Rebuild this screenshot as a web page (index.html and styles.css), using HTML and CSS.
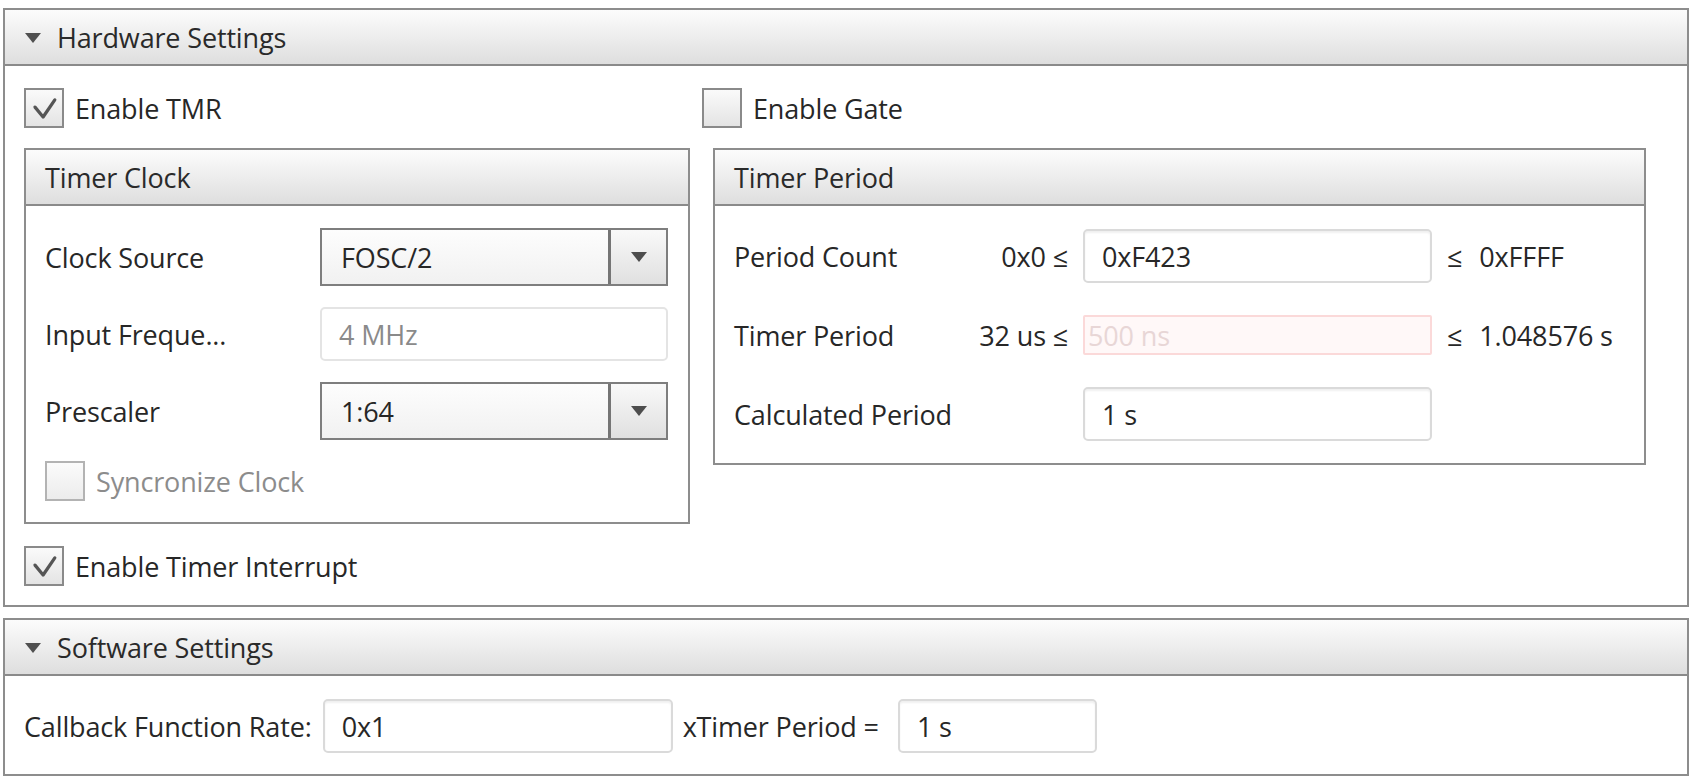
FILE: index.html
```html
<!DOCTYPE html>
<html>

<head>
	<title>TMR Configuration</title>
	<link rel="stylesheet" href="styles.css">
</head>

<body>
	<div class="panel">
		<div class="panel-head"><span class="caret"></span>Hardware Settings</div>
		<div class="panel-body hw">
			<div class="top-checks">
				<div class="check first">
					<span class="box"><svg viewBox="0 0 40 40"><path d="M10 19 L19 30 L32 11" /></svg></span>
					Enable TMR
				</div>
				<div class="check">
					<span class="box"></span>
					Enable Gate
				</div>
			</div>

			<div class="groups">
				<div class="group clock">
					<div class="group-head">Timer Clock</div>
					<div class="group-body clock-grid">
						<span class="lbl">Clock Source</span>
						<div class="combo">
							<span class="combo-val">FOSC/2</span>
							<span class="combo-btn"><svg viewBox="0 0 16 10"><path d="M0 0 H16 L8 10 Z" /></svg></span>
						</div>

						<span class="lbl">Input Freque...</span>
						<div class="field readonly">4 MHz</div>

						<span class="lbl">Prescaler</span>
						<div class="combo">
							<span class="combo-val">1:64</span>
							<span class="combo-btn"><svg viewBox="0 0 16 10"><path d="M0 0 H16 L8 10 Z" /></svg></span>
						</div>

						<div class="check disabled span-all">
							<span class="box"></span>
							Syncronize Clock
						</div>
					</div>
				</div>

				<div class="group period">
					<div class="group-head">Timer Period</div>
					<div class="group-body period-grid">
						<span class="lbl">Period Count</span>
						<span class="min">0x0 ≤</span>
						<div class="field">0xF423</div>
						<span class="max">≤<span class="max-val">0xFFFF</span></span>

						<span class="lbl">Timer Period</span>
						<span class="min">32 us ≤</span>
						<div class="field invalid">500 ns</div>
						<span class="max">≤<span class="max-val">1.048576 s</span></span>

						<span class="lbl wide">Calculated Period</span>
						<div class="field">1 s</div>
						<span></span>
					</div>
				</div>
			</div>

			<div class="check">
				<span class="box"><svg viewBox="0 0 40 40"><path d="M10 19 L19 30 L32 11" /></svg></span>
				Enable Timer Interrupt
			</div>
		</div>
	</div>

	<div class="panel sw">
		<div class="panel-head"><span class="caret"></span>Software Settings</div>
		<div class="panel-body sw-row">
			<span class="lbl">Callback Function Rate:</span>
			<div class="field rate">0x1</div>
			<span class="lbl times">xTimer Period =</span>
			<div class="field result">1 s</div>
		</div>
	</div>
</body>

</html>
```

FILE: styles.css
```css
body {
	margin: 8px 7px 0 3px;
	font-family: "Open Sans", "Noto Sans", sans-serif;
	font-size: 27px;
	letter-spacing: -0.15px;
	color: #272727;
	background: #fff;
}

.lbl,
.min,
.max {
	white-space: nowrap;
}

.panel {
	border: 2px solid #8d8d8d;
	background: #fff;
}

.panel.sw {
	margin-top: 11px;
}

.panel-head,
.group-head {
	display: flex;
	align-items: center;
	height: 54px;
	border-bottom: 2px solid #8a8a8a;
	background: linear-gradient(#fcfcfc, #dedede);
	color: #2a2a2a;
}

.panel-head {
	padding-left: 20px;
}

.caret {
	width: 0;
	height: 0;
	border-left: 8px solid transparent;
	border-right: 8px solid transparent;
	border-top: 10px solid #505050;
	margin-right: 16px;
	margin-top: 2px;
}

.panel-body.hw {
	padding: 22px 19px 19px 19px;
}

.top-checks {
	display: flex;
}

.check {
	display: flex;
	align-items: center;
	height: 40px;
}

.check.first {
	width: 678px;
}

.box {
	box-sizing: border-box;
	width: 40px;
	height: 40px;
	border: 2px solid #8a8a8a;
	background: linear-gradient(#fafafa, #e4e4e4);
	margin-right: 11px;
	flex-shrink: 0;
}

.box svg {
	display: block;
	width: 36px;
	height: 36px;
}

.box path {
	fill: none;
	stroke: #555;
	stroke-width: 3.6px;
	stroke-linecap: round;
	stroke-linejoin: round;
}

.check.disabled {
	color: #8c8c8c;
}

.check.disabled .box {
	border-color: #b3b3b3;
	background: linear-gradient(#fbfbfb, #ececec);
}

.groups {
	display: flex;
	align-items: flex-start;
	gap: 23px;
	margin: 20px 0 22px;
}

.group {
	border: 2px solid #8d8d8d;
}

.group.clock {
	width: 666px;
	box-sizing: border-box;
}

.group.period {
	width: 933px;
	box-sizing: border-box;
}

.group-head {
	padding-left: 19px;
}

.clock-grid {
	display: grid;
	grid-template-columns: 275px 348px;
	row-gap: 21px;
	align-items: center;
	padding: 22px 20px 21px 19px;
}

.span-all {
	grid-column: 1 / -1;
}

.period-grid {
	display: grid;
	grid-template-columns: 160px 163px 349px auto;
	grid-auto-rows: 54px;
	column-gap: 13px;
	row-gap: 25px;
	align-items: center;
	padding: 23px 19px 22px 19px;
}

.period-grid .min {
	text-align: right;
	padding-right: 2px;
}

.period-grid .lbl.wide {
	grid-column: 1 / 3;
}

.max {
	padding-left: 2px;
}

.max-val {
	margin-left: 17px;
}

.field {
	box-sizing: border-box;
	display: flex;
	align-items: center;
	height: 54px;
	padding-left: 17px;
	border: 2px solid #dadada;
	border-radius: 5px;
	background: #fff;
	box-shadow: inset 0 2px 2px #f0f0f0;
}

.field.readonly {
	color: #8a8a8a;
	border-color: #e4e4e4;
	box-shadow: none;
}

.field.invalid {
	height: 40px;
	padding-left: 3px;
	border-radius: 2px;
	border-color: #fbd9d9;
	background: #fff8f8;
	color: #e8d6d6;
	box-shadow: none;
}

.combo {
	box-sizing: border-box;
	display: flex;
	height: 58px;
	border: 2px solid #7e7e7e;
	background: linear-gradient(#fdfdfd, #f1f1f1);
}

.combo-val {
	flex: 1;
	display: flex;
	align-items: center;
	padding-left: 19px;
}

.combo-btn {
	display: flex;
	align-items: center;
	justify-content: center;
	width: 55px;
	border-left: 3px solid #757575;
	background: linear-gradient(#f9f9f9, #e0e0e0);
}

.combo-btn svg {
	width: 16px;
	height: 10px;
	fill: #4d4d4d;
}

.sw-row {
	display: flex;
	align-items: center;
	padding: 23px 19px 21px 19px;
}

.field.rate {
	width: 350px;
	margin-left: 11px;
}

.times {
	margin-left: 10px;
}

.field.result {
	width: 199px;
	margin-left: 19px;
}
```
